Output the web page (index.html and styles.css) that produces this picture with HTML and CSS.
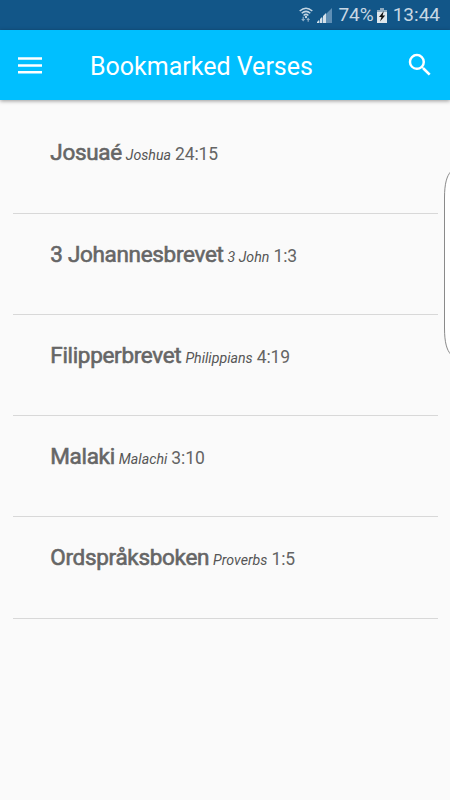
FILE: index.html
```html
<!DOCTYPE html>
<html lang="en">
<head>
<meta charset="utf-8">
<title>Bookmarked Verses</title>
<link rel="stylesheet" href="styles.css">
</head>
<body>
<div class="status">
  <svg class="wifi" width="14" height="16" viewBox="0 0 14 16">
    <g fill="none" stroke="#c3d5e3" stroke-width="1.5">
      <path d="M.7 4Q7-1.6 13.3 4"/><path d="M2.7 6.3Q7 2.4 11.3 6.3"/><path d="M4.6 8.5Q7 6.3 9.4 8.5"/>
    </g>
    <circle cx="7" cy="10" r="1.2" fill="#c3d5e3"/>
    <path d="M2.2 12h1.4V9.8h1.2V12h1.4l-2 2.6zM7.4 13l1.8-2.4L11 13H9.8v1.8H8.6V13z" fill="#8fb0ca"/>
  </svg>
  <svg class="signal" width="15" height="15" viewBox="0 0 15 15">
    <path d="M0 15L15 0v15z" fill="#5f8fb5"/>
    <path d="M0 15v-1l2-2v3zM3 15v-4l2-2v6zM6 15V8l3-3v10z" fill="#d5e1ea"/>
  </svg>
  <span class="percent">74%</span>
  <svg class="battery" width="10" height="15" viewBox="0 0 10 15">
    <path d="M3 0h4v2h3v13H0V2h3z" fill="#dfe7ed"/>
    <path d="M0 2h3V0h4v2h3v2H0z" fill="#8eabc1"/>
    <path d="M6.8 3L2 9h2.5L3 13.5 8.2 7.4H5.6z" fill="#111"/>
  </svg>
  <span class="clock">13:44</span>
</div>
<header class="bar">
  <svg class="menu" width="24" height="17" viewBox="0 0 24 17"><path d="M0 1.5h24M0 8.5h24M0 15.3h24" stroke="#fff" stroke-width="2.6"/></svg>
  <h1 class="title">Bookmarked Verses</h1>
  <svg class="search" width="30" height="30" viewBox="0 0 24 24"><path fill="#fff" d="M15.5 14h-.79l-.28-.27A6.471 6.471 0 0 0 16 9.5 6.5 6.5 0 1 0 9.5 16c1.61 0 3.09-.59 4.23-1.57l.27.28v.79l5 4.99L20.49 19l-4.99-5zm-6 0C7.01 14 5 11.99 5 9.5S7.01 5 9.5 5 14 7.01 14 9.5 11.99 14 9.5 14z"/></svg>
</header>
<main class="list">
  <div class="row"><span class="book">Josuaé</span><i class="name">Joshua</i><span class="verse">24:15</span></div>
  <div class="row"><span class="book">3 Johannesbrevet</span><i class="name">3 John</i><span class="verse">1:3</span></div>
  <div class="row"><span class="book">Filipperbrevet</span><i class="name">Philippians</i><span class="verse">4:19</span></div>
  <div class="row"><span class="book">Malaki</span><i class="name">Malachi</i><span class="verse">3:10</span></div>
  <div class="row"><span class="book">Ordspråksboken</span><i class="name">Proverbs</i><span class="verse">1:5</span></div>
</main>
<svg class="edge" width="8" height="184" viewBox="0 0 8 184"><path d="M8.500 1C5 5 2.500 12 2.500 27V157C2.500 172 5 179 8.500 183" fill="#fff" stroke="#8a8a8a"/></svg>
</body>
</html>
```

FILE: styles.css
```css
* { box-sizing: border-box; }
body {
  margin: 0;
  height: 800px;
  overflow: hidden;
  position: relative;
  background: #fafafa;
  font-family: Roboto, "Liberation Sans", sans-serif;
}
svg { display: block; flex: none; }
.status {
  height: 30px;
  background: #125688;
  display: flex;
  align-items: center;
  justify-content: flex-end;
  padding-right: 10px;
  color: #c9d8e4;
  font-size: 19px;
  line-height: 32px;
}
.wifi { margin-right: 4px; }
.signal { margin-right: 6px; }
.percent { margin-right: 3px; }
.battery { margin-right: 6px; }
.bar {
  height: 70px;
  background: #00bfff;
  display: flex;
  align-items: center;
  padding: 0 15px 0 18px;
  box-shadow: 0 1px 4px rgba(0, 0, 0, .4);
}
.title {
  margin: 4px 0 0 48px;
  flex: 1;
  color: #fff;
  font-size: 25px;
  font-weight: 400;
  line-height: 30px;
  white-space: nowrap;
}
.list { padding: 12.4px 12.5px 0; }
.row {
  height: 101.25px;
  border-bottom: 1px solid #d8d8d8;
  padding: 24px 0 0 37.8px;
  line-height: 32px;
  white-space: nowrap;
}
.book {
  font-size: 22.5px;
  letter-spacing: -.32px;
  color: #666;
  -webkit-text-stroke: .6px #666;
}
.name {
  margin: 0 4px;
  font-size: 14.2px;
  color: #555;
}
.verse { font-size: 17.5px; letter-spacing: -.1px; color: #646464; }
.edge { position: absolute; right: 0; top: 171px; }
```
